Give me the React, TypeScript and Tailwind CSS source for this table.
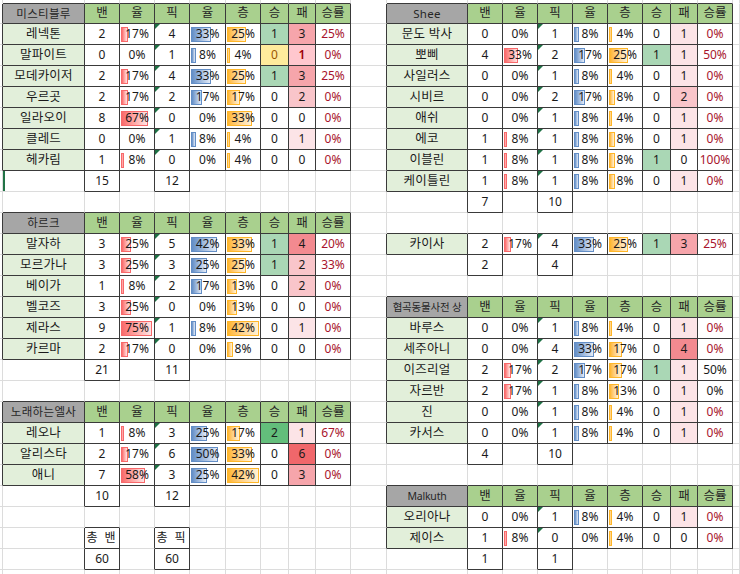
import React from "react";

type Champ = {
  n: string;
  b: number;
  br: number;
  p: number;
  pr: number;
  t: number;
  w: number;
  l: number;
  wr: string;
  dark?: boolean;
  flag?: boolean;
};

type Table = { row: number; col: number; title: string | null; rows: Champ[]; sums: [string, string] };

type CellDef =
  | { k: "title"; t: string; small?: boolean }
  | { k: "hdr"; t: string }
  | { k: "name"; t: string }
  | { k: "num"; t: string }
  | { k: "pick"; t: string }
  | { k: "bar"; v: number; c: "r" | "b" | "o" }
  | { k: "win"; v: number; flag?: boolean }
  | { k: "loss"; v: number; flag?: boolean }
  | { k: "rate"; t: string; dark?: boolean }
  | { k: "sum"; t: string };

const ch = (
  n: string, b: number, br: number, p: number, pr: number, t: number, w: number, l: number, wr: string,
  opts: { dark?: boolean; flag?: boolean } = {}
): Champ => ({ n, b, br, p, pr, t, w, l, wr, ...opts });

const tables: Table[] = [
  {
    row: 0, col: 1, title: "미스티블루", sums: ["15", "12"],
    rows: [
      ch("레넥톤", 2, 17, 4, 33, 25, 1, 3, "25%"),
      ch("말파이트", 0, 0, 1, 8, 4, 0, 1, "0%", { flag: true }),
      ch("모데카이저", 2, 17, 4, 33, 25, 1, 3, "25%"),
      ch("우르곳", 2, 17, 2, 17, 17, 0, 2, "0%"),
      ch("일라오이", 8, 67, 0, 0, 33, 0, 0, "0%"),
      ch("클레드", 0, 0, 1, 8, 4, 0, 1, "0%"),
      ch("헤카림", 1, 8, 0, 0, 4, 0, 0, "0%"),
    ],
  },
  {
    row: 10, col: 1, title: "하르크", sums: ["21", "11"],
    rows: [
      ch("말자하", 3, 25, 5, 42, 33, 1, 4, "20%"),
      ch("모르가나", 3, 25, 3, 25, 25, 1, 2, "33%"),
      ch("베이가", 1, 8, 2, 17, 13, 0, 2, "0%"),
      ch("벨코즈", 3, 25, 0, 0, 13, 0, 0, "0%"),
      ch("제라스", 9, 75, 1, 8, 42, 0, 1, "0%"),
      ch("카르마", 2, 17, 0, 0, 8, 0, 0, "0%"),
    ],
  },
  {
    row: 19, col: 1, title: "노래하는엘사", sums: ["10", "12"],
    rows: [
      ch("레오나", 1, 8, 3, 25, 17, 2, 1, "67%"),
      ch("알리스타", 2, 17, 6, 50, 33, 0, 6, "0%"),
      ch("애니", 7, 58, 3, 25, 42, 0, 3, "0%"),
    ],
  },
  {
    row: 0, col: 11, title: "Shee", sums: ["7", "10"],
    rows: [
      ch("문도 박사", 0, 0, 1, 8, 4, 0, 1, "0%"),
      ch("뽀삐", 4, 33, 2, 17, 25, 1, 1, "50%"),
      ch("사일러스", 0, 0, 1, 8, 4, 0, 1, "0%"),
      ch("시비르", 0, 0, 2, 17, 8, 0, 2, "0%"),
      ch("애쉬", 0, 0, 1, 8, 4, 0, 1, "0%"),
      ch("에코", 1, 8, 1, 8, 8, 0, 1, "0%"),
      ch("이블린", 1, 8, 1, 8, 8, 1, 0, "100%"),
      ch("케이틀린", 1, 8, 1, 8, 8, 0, 1, "0%"),
    ],
  },
  {
    row: 10, col: 11, title: null, sums: ["2", "4"],
    rows: [ch("카이사", 2, 17, 4, 33, 25, 1, 3, "25%")],
  },
  {
    row: 14, col: 11, title: "협곡동물사전 상", sums: ["4", "10"],
    rows: [
      ch("바루스", 0, 0, 1, 8, 4, 0, 1, "0%"),
      ch("세주아니", 0, 0, 4, 33, 17, 0, 4, "0%"),
      ch("이즈리얼", 2, 17, 2, 17, 17, 1, 1, "50%", { dark: true }),
      ch("자르반", 2, 17, 1, 8, 13, 0, 1, "0%", { dark: true }),
      ch("진", 0, 0, 1, 8, 4, 0, 1, "0%"),
      ch("카서스", 0, 0, 1, 8, 4, 0, 1, "0%"),
    ],
  },
  {
    row: 23, col: 11, title: "Malkuth", sums: ["1", "1"],
    rows: [
      ch("오리아나", 0, 0, 1, 8, 4, 0, 1, "0%"),
      ch("제이스", 1, 8, 0, 0, 4, 0, 0, "0%"),
    ],
  },
];

const HEADS = ["밴", "율", "픽", "율", "층", "승", "패", "승률"];
const NROWS = 28;
const NCOLS = 21;

function buildSheet() {
  const g: (CellDef | null)[][] = Array.from({ length: NROWS }, () => Array(NCOLS).fill(null));
  for (const tb of tables) {
    const c = tb.col;
    if (tb.title) {
      g[tb.row][c] = { k: "title", t: tb.title, small: tb.title.length > 6 };
      HEADS.forEach((h, i) => (g[tb.row][c + 1 + i] = { k: "hdr", t: h }));
    }
    tb.rows.forEach((r, i) => {
      const y = tb.row + 1 + i;
      g[y][c] = { k: "name", t: r.n };
      g[y][c + 1] = { k: "num", t: String(r.b) };
      g[y][c + 2] = { k: "bar", v: r.br, c: "r" };
      g[y][c + 3] = { k: "pick", t: String(r.p) };
      g[y][c + 4] = { k: "bar", v: r.pr, c: "b" };
      g[y][c + 5] = { k: "bar", v: r.t, c: "o" };
      g[y][c + 6] = { k: "win", v: r.w, flag: r.flag };
      g[y][c + 7] = { k: "loss", v: r.l, flag: r.flag };
      g[y][c + 8] = { k: "rate", t: r.wr, dark: r.dark };
    });
    const sy = tb.row + 1 + tb.rows.length;
    g[sy][c + 1] = { k: "sum", t: tb.sums[0] };
    g[sy][c + 3] = { k: "sum", t: tb.sums[1] };
  }
  g[25][2] = { k: "sum", t: "총 밴" };
  g[26][2] = { k: "sum", t: "60" };
  g[25][4] = { k: "sum", t: "총 픽" };
  g[26][4] = { k: "sum", t: "60" };
  return g;
}

const lossBg = (v: number) =>
  v === 1 ? "bg-[#fce4e7]" : v === 2 ? "bg-[#f9c5ca]" : v === 3 ? "bg-[#f6a5ab]" : v === 4 ? "bg-[#f38a90]" : v >= 5 ? "bg-[#f0676b]" : "bg-white";

function barWidth(v: number, c: "r" | "b" | "o") {
  if (v <= 0) return 0;
  if (c === "r") return Math.max(3, Math.round(v * 0.41));
  if (c === "b") return Math.min(27, Math.max(4, Math.round(v * 0.62)));
  return Math.min(33, Math.max(3, Math.round(v * 0.76)));
}

function Bar({ v, c }: { v: number; c: "r" | "b" | "o" }) {
  const w = barWidth(v, c);
  const cls =
    c === "r"
      ? "bg-gradient-to-r from-[#f8696b] to-[#fde3e4] border-[#f8696b]"
      : c === "b"
      ? "bg-gradient-to-r from-[#638ec6] to-[#e4ebf6] border-[#638ec6]"
      : "bg-gradient-to-r from-[#ffb628] to-[#fff1d6] border-[#ffb628]";
  return (
    <>
      {w > 0 && <span className={`absolute left-[1px] top-[3px] bottom-[2px] border ${cls}`} style={{ width: w }} />}
      <span className="relative">{v}%</span>
    </>
  );
}

function Content({ cell }: { cell: CellDef }) {
  switch (cell.k) {
    case "title":
      return <span className={cell.small ? "text-[10.5px] tracking-[-0.2px]" : "text-[11.5px] tracking-[0.3px]"}>{cell.t}</span>;
    case "bar":
      return <Bar v={cell.v} c={cell.c} />;
    case "pick":
      return (
        <>
          <span className="absolute left-0 top-0 h-0 w-0 border-t-[5px] border-r-[5px] border-t-[#1e7145] border-r-transparent" />
          <span>{cell.t}</span>
        </>
      );
    case "win":
    case "loss":
      return <span>{cell.v}</span>;
    case "sum":
      return <span className={cell.t.includes(" ") ? "tracking-[2px]" : ""}>{cell.t}</span>;
    default:
      return <span>{cell.t}</span>;
  }
}

function cellClass(cell: CellDef | null) {
  if (!cell) return "bg-white";
  switch (cell.k) {
    case "title":
      return "bg-[#a6a6a6] text-[#262626]";
    case "hdr":
      return "bg-[#a9d08e] text-[#262626] text-[12.5px]";
    case "name":
      return "bg-[#e2efda] text-[#1a1a1a] text-[12.5px] tracking-[0.2px]";
    case "win":
      if (cell.flag) return "bg-[#ffeb9c] text-[#9c5700]";
      return cell.v >= 2 ? "bg-[#63be7b] text-[#1a1a1a]" : cell.v === 1 ? "bg-[#aad7b5] text-[#1a1a1a]" : "bg-white text-[#1a1a1a]";
    case "loss":
      if (cell.flag) return "bg-[#ffc7ce] text-[#9c0006] font-semibold";
      return `${lossBg(cell.v)} text-[#1a1a1a]`;
    case "rate":
      return cell.dark ? "bg-white text-[#1a1a1a]" : "bg-white text-[#a8142c]";
    default:
      return "bg-white text-[#1a1a1a]";
  }
}

export default function App() {
  const g = buildSheet();
  const at = (r: number, c: number) => (r >= 0 && r < NROWS && c < NCOLS ? g[r][c] : null);
  const rowsToDraw = Array.from({ length: NROWS + 1 }, (_, i) => i - 1);

  return (
    <div className="h-[574px] w-[740px] overflow-hidden bg-white font-['Noto_Sans','Noto_Sans_CJK_KR',sans-serif] text-[12px] leading-none">
      <div className="grid grid-cols-[3px_82px_35px_35px_35px_36px_35px_28px_27px_35px_36px_81px_35px_35px_35px_35px_35px_28px_27px_35px_7px] grid-rows-[4px_20px_repeat(27,21px)]">
        {rowsToDraw.map((r) =>
          Array.from({ length: NCOLS }, (_, c) => {
            const cell = r >= 0 ? at(r, c) : null;
            const rightDark = !!cell || !!at(r, c + 1);
            const bottomDark = !!cell || !!at(r + 1, c);
            const selected = r === 8 && c === 1;
            return (
              <div
                key={`${r}-${c}`}
                className={`relative flex items-center justify-center overflow-hidden whitespace-nowrap border-r border-b ${
                  rightDark ? "border-r-[#3a3a3a]" : "border-r-[#dcdcdc]"
                } ${r === -1 && !bottomDark ? "border-b-transparent" : bottomDark ? "border-b-[#3a3a3a]" : "border-b-[#dcdcdc]"} ${cellClass(cell)}`}
              >
                {selected && <span className="absolute left-0 top-0 bottom-0 w-[2px] bg-[#217346]" />}
                {cell && <Content cell={cell} />}
              </div>
            );
          })
        )}
      </div>
    </div>
  );
}
